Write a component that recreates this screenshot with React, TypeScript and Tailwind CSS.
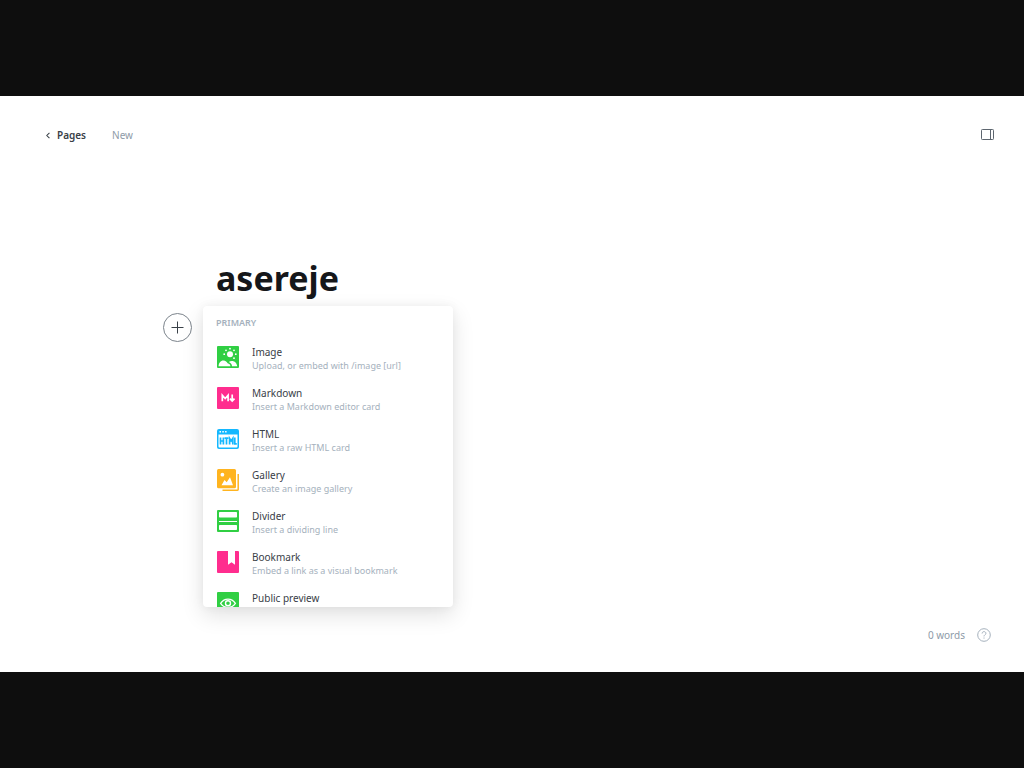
import { useState, type ReactNode } from "react";

function Tile({ children }: { children: ReactNode }) {
  return (
    <svg viewBox="0 0 22 22" className="size-[22px] shrink-0" aria-hidden="true">
      {children}
    </svg>
  );
}

const ImageIcon = () => (
  <Tile>
    <rect width="22" height="22" rx="1" fill="#30cf43" />
    <circle cx="13" cy="8.2" r="3" fill="#fff" />
    <g fill="#fff">
      <circle cx="13" cy="2.7" r=".9" />
      <circle cx="17" cy="4.3" r=".9" />
      <circle cx="18.8" cy="8.2" r=".9" />
      <circle cx="17" cy="12.2" r=".9" />
      <circle cx="9" cy="4.3" r=".9" />
      <circle cx="7.2" cy="8.2" r=".9" />
    </g>
    <path d="M1.6 20.3c0-3.4 2-5.9 4.8-5.9 2.3 0 3.5 1.5 4.2 2.8 1.7.3 2.8 1.5 2.8 3.1z" fill="#fff" />
    <path d="M11.8 16.1c.9-.8 1.9-1.2 3.1-1.2 2.9 0 5 2.2 5.3 5.4h-5.2c0-1.900-1.300-3.500-3.200-4.200z" fill="#fff" />
  </Tile>
);

const MarkdownIcon = () => (
  <Tile>
    <rect width="22" height="22" rx="1" fill="#ff2d8e" />
    <path d="M5.300 14.300V8.300L8.200 11.500 11.100 8.300v6M15.200 7.500v6M12.900 11.600l2.300 2.500 2.300-2.500" fill="none" stroke="#fff" strokeWidth="1.700" />
  </Tile>
);

const HtmlIcon = () => (
  <Tile>
    <rect y="1" width="22" height="20" rx="2" fill="#14b8ff" />
    <path d="M1.500 6.500h19v12a1 1 0 0 1-1 1h-17a1 1 0 0 1-1-1z" fill="#fff" />
    <path d="M2.500 3.800h1.500M5.300 3.800h1.500M8.100 3.800h1.500" stroke="#fff" strokeWidth="1.400" />
    <path d="M3.500 9.500v7M6.400 9.500v7M3.500 13h2.900M7.600 10.200h3.800M9.500 10v6.500M12.600 16.500v-6l1.600 2.500 1.600-2.500v6M17.800 9.500v6.300h2" fill="none" stroke="#14b8ff" strokeWidth="1.700" />
  </Tile>
);

const GalleryIcon = () => (
  <Tile>
    <rect width="19" height="19.300" rx="1.500" fill="#ffb41f" />
    <path d="M21.200 5v15.500a.7.7 0 0 1-.7.7H5.500" fill="none" stroke="#ffb41f" strokeWidth="1.500" />
    <circle cx="5.400" cy="5.700" r="1.900" fill="#fff" />
    <path d="M4.500 16.200 7.500 11l2.200 2.300L13 8.300l3 7.900z" fill="#fff" />
  </Tile>
);

const DividerIcon = () => (
  <Tile>
    <rect width="22" height="22" rx="1" fill="#30cf43" />
    <rect x="2" y="2" width="18" height="5.500" rx=".7" fill="#fff" />
    <path d="M2 11.500h18" stroke="#fff" strokeWidth="1" />
    <rect x="2" y="15" width="18" height="5" rx=".7" fill="#fff" />
  </Tile>
);

const BookmarkIcon = () => (
  <Tile>
    <rect width="22" height="22" rx="1" fill="#ff2d8e" />
    <path d="M11 0h7v13.800l-3.500-2.500-3.500 2.500z" fill="#fff" />
  </Tile>
);

const PreviewIcon = () => (
  <Tile>
    <rect width="22" height="22" rx="1" fill="#30cf43" />
    <path d="M3.600 11.300C7.500 5.800 14.500 5.800 18.400 11.300 14.500 16.800 7.500 16.800 3.600 11.300z" fill="none" stroke="#fff" strokeWidth="1.300" />
    <circle cx="11" cy="11.200" r="2.500" fill="none" stroke="#fff" strokeWidth="1.400" />
  </Tile>
);

const cards = [
  { name: "Image", hint: "Upload, or embed with /image [url]", Icon: ImageIcon },
  { name: "Markdown", hint: "Insert a Markdown editor card", Icon: MarkdownIcon },
  { name: "HTML", hint: "Insert a raw HTML card", Icon: HtmlIcon },
  { name: "Gallery", hint: "Create an image gallery", Icon: GalleryIcon },
  { name: "Divider", hint: "Insert a dividing line", Icon: DividerIcon },
  { name: "Bookmark", hint: "Embed a link as a visual bookmark", Icon: BookmarkIcon },
  { name: "Public preview", hint: "", Icon: PreviewIcon },
];

function CardMenu() {
  return (
    <section
      aria-label="Primary cards"
      className="absolute top-0 left-10 z-10 h-[301px] w-[250px] overflow-hidden rounded bg-white pt-3 shadow-[0_0_10px_rgba(0,0,0,0.05),0_8px_22px_rgba(0,0,0,0.12)]"
    >
      <h2 className="mb-[18px] px-[13px] text-[9px] leading-[10px] font-semibold text-[#a5b1bd]">PRIMARY</h2>
      <ul>
        {cards.map(({ name, hint, Icon }) => (
          <li key={name}>
            <button type="button" className="flex h-[41px] w-full items-start gap-[13px] px-[14px] text-left">
              <Icon />
              <span className="flex flex-col">
                <span className="text-[10px] leading-[12px] text-[#394047]">{name}</span>
                {hint && <span className="text-[9px] leading-[15px] whitespace-nowrap text-[#a5b1bd]">{hint}</span>}
              </span>
            </button>
          </li>
        ))}
      </ul>
    </section>
  );
}

export default function App() {
  const [open, setOpen] = useState(true);
  return (
    <div className="flex min-h-screen flex-col justify-center bg-[#0e0e0e] font-['Noto_Sans','Open_Sans',sans-serif]">
      <main className="flex aspect-video w-full flex-col bg-white">
        <header className="flex items-center justify-between pt-[29px] pr-[30px] pl-[46px]">
          <nav className="flex items-center gap-[26px] text-[10px] leading-5">
            <a href="#pages" className="flex items-center gap-[7px] font-semibold text-[#394047]">
              <svg viewBox="0 0 5 8" className="h-[7px] w-[4px]" fill="none" stroke="currentColor" strokeWidth="1.300" aria-hidden="true">
                <path d="M4.300.7 1 4l3.300 3.300" />
              </svg>
              Pages
            </a>
            <span className="text-[#8e9ba8]">New</span>
          </nav>
          <button type="button" aria-label="Settings">
            <svg viewBox="0 0 13 12" className="h-3 w-[13px]" fill="none" stroke="#5d666f" aria-hidden="true">
              <rect x=".5" y=".5" width="12" height="10" rx=".8" />
              <path d="M9.500 .5v10" />
            </svg>
          </button>
        </header>

        <div className="flex grow flex-col pt-[109px] pl-[163px]">
          <h1 className="mb-1 pl-[53px] text-[34px] leading-[48px] font-bold text-[#15171a]">asereje</h1>
          <div className="relative pt-[7px]">
            <button
              type="button"
              aria-label="Add a card"
              aria-expanded={open}
              onClick={() => setOpen(!open)}
              className="flex size-[29px] items-center justify-center rounded-full border border-[#7c848c]"
            >
              <svg viewBox="0 0 13 13" className="size-[13px]" stroke="#394047" aria-hidden="true">
                <path d="M6.500.5v12M.5 6.500h12" />
              </svg>
            </button>
            {open && <CardMenu />}
          </div>
        </div>

        <footer className="flex items-center justify-end gap-3 pr-[33px] pb-[28px]">
          <span className="text-[10px] leading-[18px] text-[#8e9ba8]">0 words</span>
          <a href="#help" aria-label="Help">
            <svg viewBox="0 0 14 14" className="size-[14px]" fill="none" stroke="#a5b1bd" aria-hidden="true">
              <circle cx="7" cy="7" r="6.300" />
              <path d="M5.100 5.500C5.100 3 8.900 3 8.900 5.400 8.900 6.800 7 6.800 7 8.400M7 9.500v1.100" />
            </svg>
          </a>
        </footer>
      </main>
    </div>
  );
}
